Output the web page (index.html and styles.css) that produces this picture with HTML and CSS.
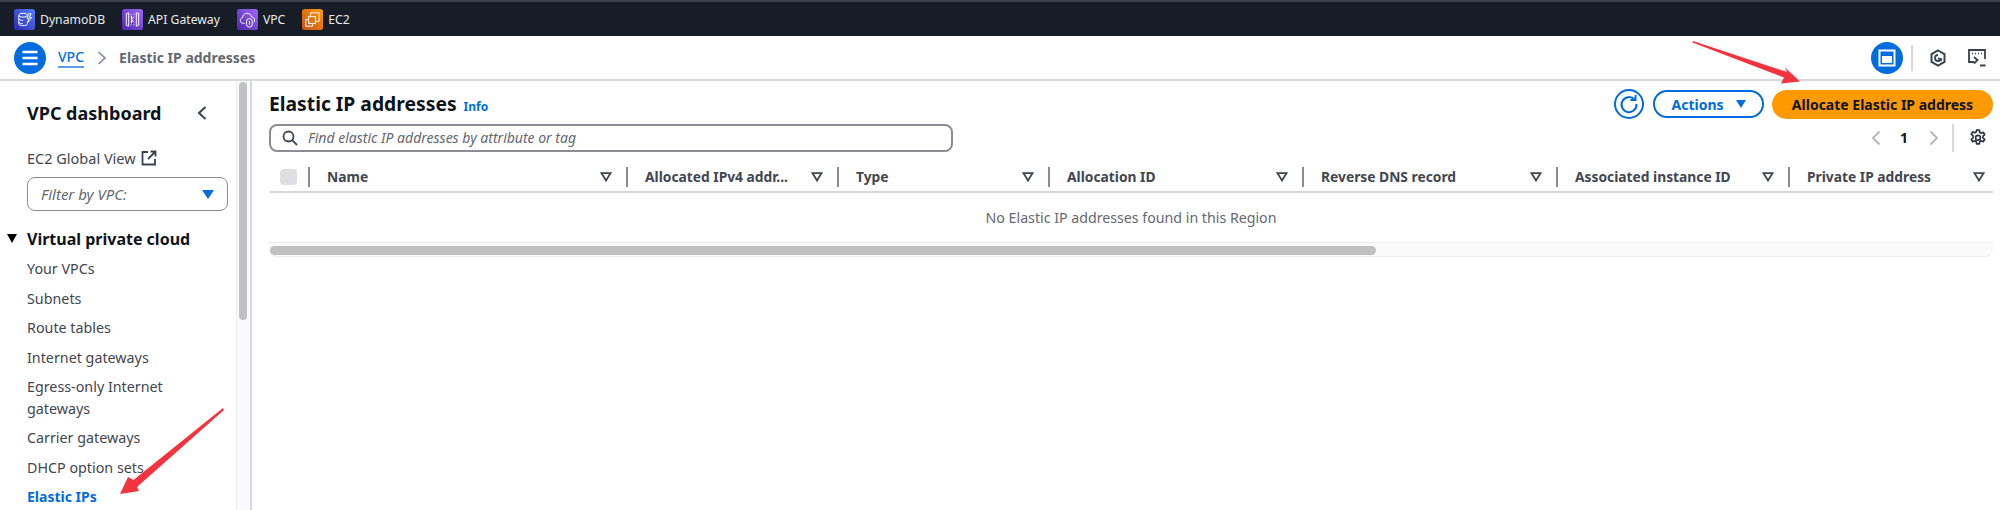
FILE: index.html
```html
<!DOCTYPE html>
<html lang="en">
<head>
<meta charset="utf-8">
<title>Elastic IP addresses</title>
<link rel="stylesheet" href="styles.css">
</head>
<body>
<header class="topbar">
  <a class="fav"><svg class="fav-icon" viewBox="0 0 22 22"><defs><linearGradient id="gd" x1="0" y1="1" x2="1" y2="0"><stop offset="0" stop-color="#2e27ad"/><stop offset="1" stop-color="#527fff"/></linearGradient></defs><rect width="22" height="22" rx="3" fill="url(#gd)"/><g fill="none" stroke="#fff" stroke-width="1"><ellipse cx="9.5" cy="6.5" rx="4.5" ry="2"/><path d="M5 6.500v9c0 1.200 2 2 4.500 2s4.500-.8 4.500-2v-2M5 10c0 1.200 2 2 4.500 2M5 13.500c0 1.200 2 2 4.500 2M14 8v1M15 5h3l-2 4h2.500l-4 5 1-4h-1.500z"/></g></svg>DynamoDB</a>
  <a class="fav"><svg class="fav-icon" viewBox="0 0 22 22"><defs><linearGradient id="ga" x1="0" y1="1" x2="1" y2="0"><stop offset="0" stop-color="#4d27a8"/><stop offset="1" stop-color="#a166ff"/></linearGradient></defs><rect width="22" height="22" rx="3" fill="url(#ga)"/><g fill="none" stroke="#fff" stroke-width="1"><path d="M7 4 4.500 5v12L7 18zM15 4l2.500 1v12L15 18zM9.500 5v1M9.500 8v1M9.500 13v1M9.500 16v1M12.500 5v1M12.500 16v1M12.500 8 10 11l2.500 3M10 7v8"/></g></svg>API Gateway</a>
  <a class="fav"><svg class="fav-icon" viewBox="0 0 22 22"><rect width="22" height="22" rx="3" fill="url(#ga)"/><g fill="none" stroke="#fff" stroke-width="1"><path d="M8 15H6.500C4.500 15 3.500 13.500 3.500 12c0-1.500 1-2.700 2.300-2.900C6 6.500 8 4.500 10.500 4.500c2.500 0 4.300 1.700 4.800 3.800 1.800.2 3.200 1.700 3.200 3.400 0 .8-.3 1.500-.7 2.100"/><rect x="10" y="10" width="6" height="9" rx="3"/><path d="M13 12.500v4"/></g></svg>VPC</a>
  <a class="fav"><svg class="fav-icon" viewBox="0 0 22 22"><defs><linearGradient id="ge" x1="0" y1="1" x2="1" y2="0"><stop offset="0" stop-color="#c8511b"/><stop offset="1" stop-color="#ff9900"/></linearGradient></defs><rect width="22" height="22" rx="3" fill="url(#ge)"/><g fill="none" stroke="#fff" stroke-width="1"><path d="M9 8V4h9v9h-4"/><rect x="7" y="8" width="7" height="7"/><path d="M7 11H4v7h7v-3"/></g></svg>EC2</a>
</header>

<nav class="crumbbar">
  <button class="round-btn" aria-label="Menu"><svg viewBox="0 0 32 32" width="32" height="32"><path d="M8.500 10h15M8.500 16h15M8.500 22h15" stroke="#fff" stroke-width="2.500" fill="none"/></svg></button>
  <a class="crumb-link">VPC</a>
  <svg class="crumb-sep" viewBox="0 0 10 14" width="10" height="14"><path d="M1.500 1 8 7l-6.500 6" fill="none" stroke="#7d8998" stroke-width="1.600"/></svg>
  <span class="crumb-current">Elastic IP addresses</span>
  <div class="crumb-tools">
    <button class="round-btn" aria-label="Panel"><svg viewBox="0 0 32 32" width="32" height="32"><rect x="8.500" y="8.500" width="15" height="15" fill="none" stroke="#fff" stroke-width="2"/><rect x="11" y="14" width="10" height="7" fill="#fff"/></svg></button>
    <span class="tool-sep"></span>
    <svg class="tool-icon" viewBox="0 0 18 18" width="18" height="18"><path d="M9 1.500 15.500 5.200v7.600L9 16.500 2.500 12.800V5.200z" fill="none" stroke="#39424e" stroke-width="2"/><path d="M9 6a3 3 0 1 0 3 3" fill="none" stroke="#39424e" stroke-width="1.800"/><path d="M9 9l4 2.500" stroke="#39424e" stroke-width="1.800"/></svg>
    <svg class="tool-icon" viewBox="0 0 18 18" width="18" height="18"><path d="M6 13H1V1h16v9" fill="none" stroke="#39424e" stroke-width="1.800"/><path d="M4 4.500h1M7 4.500h1M10 4.500h1M13 4.500h1" stroke="#39424e" stroke-width="1.500"/><path d="M6 8l3.500 3L6 14.500M12 16.500h5.500" fill="none" stroke="#39424e" stroke-width="1.800"/></svg>
  </div>
</nav>

<div class="workspace">
  <aside class="sidebar">
    <div class="side-inner">
      <div class="side-head">
        <h2 class="side-title">VPC dashboard</h2>
        <svg viewBox="0 0 12 16" width="12" height="16"><path d="M9.500 2 3 8l6.500 6" fill="none" stroke="#39424e" stroke-width="2"/></svg>
      </div>
      <a class="side-global">EC2 Global View<svg viewBox="0 0 16 16" width="16" height="16"><path d="M7 2H1.500v12.500H14V9" fill="none" stroke="#39424e" stroke-width="1.800"/><path d="M9.500 1.500h5v5M14.500 1.500 7 9" fill="none" stroke="#39424e" stroke-width="1.800"/></svg></a>
      <div class="side-filter"><span>Filter by VPC:</span><i class="caret caret-blue caret-large"></i></div>
      <div class="side-section"><i class="caret caret-black"></i>Virtual private cloud</div>
      <ul class="side-list">
        <li>Your VPCs</li>
        <li>Subnets</li>
        <li>Route tables</li>
        <li>Internet gateways</li>
        <li>Egress-only Internet gateways</li>
        <li>Carrier gateways</li>
        <li>DHCP option sets</li>
        <li class="active">Elastic IPs</li>
      </ul>
    </div>
    <div class="side-scroll"><div class="side-thumb"></div></div>
  </aside>

  <main class="main">
    <div class="title-row">
      <h1 class="page-title">Elastic IP addresses</h1>
      <a class="info">Info</a>
      <div class="actions">
        <button class="refresh" aria-label="Refresh"><svg viewBox="0 0 20 20" width="20" height="20"><path d="M15.500 5.500A7.500 7.500 0 1 0 17.500 10" fill="none" stroke="#006ce0" stroke-width="2"/><path d="M11.500 6h5V1" fill="none" stroke="#006ce0" stroke-width="2"/></svg></button>
        <button class="btn-actions">Actions<i class="caret caret-blue"></i></button>
        <button class="btn-primary">Allocate Elastic IP address</button>
      </div>
    </div>
    <div class="filter-row">
      <div class="search">
        <svg viewBox="0 0 16 16" width="16" height="16"><circle cx="6.500" cy="6.500" r="5" fill="none" stroke="#424650" stroke-width="1.800"/><path d="M10.200 10.200 15 15" stroke="#424650" stroke-width="1.800"/></svg>
        <span>Find elastic IP addresses by attribute or tag</span>
      </div>
      <div class="pager">
        <svg viewBox="0 0 10 16" width="10" height="16"><path d="M8.500 1.500 2 8l6.500 6.500" fill="none" stroke="#b4b4bb" stroke-width="1.800"/></svg>
        <span class="page-no">1</span>
        <svg viewBox="0 0 10 16" width="10" height="16"><path d="M1.500 1.500 8 8l-6.500 6.500" fill="none" stroke="#b4b4bb" stroke-width="1.800"/></svg>
        <span class="pager-sep"></span>
        <svg class="gear" viewBox="0 0 18 18" width="18" height="18"><path d="M7.600 1.200h2.800l.4 2.200 1.500.8 2-.9 1.400 2.400-1.700 1.400v1.800l1.700 1.400-1.400 2.400-2-.9-1.500.8-.4 2.200H7.600l-.4-2.200-1.500-.8-2 .9-1.400-2.400 1.700-1.400V6.700L2.300 5.300 3.700 2.900l2 .9 1.500-.8z" fill="none" stroke="#2c3440" stroke-width="1.700" stroke-linejoin="round"/><circle cx="9" cy="8.700" r="2.400" fill="none" stroke="#2c3440" stroke-width="1.700"/></svg>
      </div>
    </div>
    <div class="table">
      <div class="thead">
        <div class="th-check"><span class="checkbox"></span></div>
        <div class="th th-name"><span>Name</span><svg class="sort" viewBox="0 0 12 10"><path d="M1.500 1.200h9L6 8.500z" fill="none" stroke="#424650" stroke-width="1.800"/></svg></div>
        <div class="th th-ip"><span>Allocated IPv4 addr...</span><svg class="sort" viewBox="0 0 12 10"><path d="M1.500 1.200h9L6 8.500z" fill="none" stroke="#424650" stroke-width="1.800"/></svg></div>
        <div class="th th-ip"><span>Type</span><svg class="sort" viewBox="0 0 12 10"><path d="M1.500 1.200h9L6 8.500z" fill="none" stroke="#424650" stroke-width="1.800"/></svg></div>
        <div class="th th-id"><span>Allocation ID</span><svg class="sort" viewBox="0 0 12 10"><path d="M1.500 1.200h9L6 8.500z" fill="none" stroke="#424650" stroke-width="1.800"/></svg></div>
        <div class="th th-id"><span>Reverse DNS record</span><svg class="sort" viewBox="0 0 12 10"><path d="M1.500 1.200h9L6 8.500z" fill="none" stroke="#424650" stroke-width="1.800"/></svg></div>
        <div class="th th-inst"><span>Associated instance ID</span><svg class="sort" viewBox="0 0 12 10"><path d="M1.500 1.200h9L6 8.500z" fill="none" stroke="#424650" stroke-width="1.800"/></svg></div>
        <div class="th th-last"><span>Private IP address</span><svg class="sort" viewBox="0 0 12 10"><path d="M1.500 1.200h9L6 8.500z" fill="none" stroke="#424650" stroke-width="1.800"/></svg></div>
      </div>
      <div class="empty">No Elastic IP addresses found in this Region</div>
      <div class="hscroll"><div class="hthumb"></div></div>
    </div>
  </main>
</div>

<svg class="annotations" viewBox="0 0 2000 510" width="2000" height="510">
  <path d="M1693 41 1787 72 1785 67.500 1800 81.500 1781 83.500 1784 77.500 1692.500 42.500z" fill="#f5333f"/>
  <path d="M223 408 133.500 480 128 477 120 494 139 491 137 487 224 410z" fill="#f5333f"/>
</svg>
</body>
</html>
```
FILE: styles.css
```css
* { box-sizing: border-box; }
html, body { margin: 0; padding: 0; }
body {
  position: relative;
  width: 2000px;
  height: 510px;
  overflow: hidden;
  background: #fff;
  font-family: "Noto Sans", sans-serif;
  font-size: 14px;
  color: #424650;
}
button { font-family: inherit; border: 0; padding: 0; background: none; }
h1, h2 { margin: 0; }
ul { margin: 0; padding: 0; list-style: none; }
i { display: block; }

.topbar {
  height: 36px;
  display: flex;
  align-items: center;
  gap: 17px;
  padding: 1px 0 0 14px;
  background: #161d26;
  border-top: 2px solid #3b4048;
}
.fav { display: flex; align-items: center; gap: 5px; color: #e9ebed; font-size: 12.200px; font-weight: 400; }
.fav-icon { width: 21px; height: 21px; }

.crumbbar {
  height: 45px;
  display: flex;
  align-items: center;
  padding: 0 14px 0 14px;
  border-bottom: 2px solid #d5d8dc;
}
.round-btn { width: 32px; height: 32px; border-radius: 50%; background: #006ce0; display: block; }
.round-btn svg { display: block; }
.crumb-link { margin-left: 12px; color: #006ce0; font-size: 14px; font-weight: 500; line-height: 18px; border-bottom: 2px solid #5b9ee8; }
.crumb-sep { margin: 0 12px 0 13px; }
.crumb-current { color: #656871; font-size: 14px; font-weight: 700; }
.crumb-tools { margin-left: auto; display: flex; align-items: center; }
.tool-sep { width: 2px; height: 26px; background: #d5d8dc; margin: 0 16px 0 8px; }
.tool-icon + .tool-icon { margin-left: 21px; }

.workspace { display: flex; height: 429px; }
.sidebar { width: 252px; display: flex; border-right: 2px solid #d5d8dc; flex: none; }
.side-inner { width: 236px; padding: 0 0 0 27px; flex: none; }
.side-scroll { width: 14px; background: #fafafa; border-left: 1px solid #ececec; padding: 1px 0 0 2px; }
.side-thumb { width: 8px; height: 238px; border-radius: 4px; background: #c1c1c1; }
.side-head { display: flex; align-items: center; justify-content: space-between; padding: 16px 28px 0 0; height: 48px; }
.side-title { font-size: 18px; font-weight: 700; color: #0f141a; line-height: 24px; }
.side-global { display: flex; align-items: center; gap: 5px; margin-top: 19px; height: 20px; font-size: 14.500px; color: #424650; }
.side-filter {
  width: 201px;
  height: 34px;
  margin-top: 9px;
  padding: 0 13px;
  display: flex;
  align-items: center;
  justify-content: space-between;
  border: 1px solid #8c8c94;
  border-radius: 8px;
  font-style: italic;
  font-size: 15px;
  color: #656871;
}
.caret { width: 0; height: 0; border-style: solid; border-width: 8px 5.500px 0; border-color: #000 transparent transparent; }
.caret-blue { border-top-color: #006ce0; }
.caret-large { border-width: 9px 6px 0; }
.side-section { position: relative; margin-top: 17px; font-size: 16px; font-weight: 700; color: #0f141a; line-height: 22px; }
.caret-black { position: absolute; left: -20px; top: 6px; border-width: 9px 5.500px 0; }
.side-list { width: 175px; margin-top: 8px; font-size: 14.300px; line-height: 21.700px; }
.side-list li { margin-bottom: 7.800px; }
.side-list .active { color: #006ce0; font-weight: 700; font-size: 14px; }

.main { flex: 1; padding: 0 7px 0 17px; min-width: 0; }
.title-row { display: flex; align-items: center; height: 41px; padding-top: 5px; }
.page-title { font-size: 19.300px; font-weight: 700; color: #0f141a; line-height: 26px; }
.info { margin-left: 7px; padding-top: 4px; color: #006ce0; font-size: 12px; font-weight: 700; }
.actions { margin-left: auto; display: flex; align-items: center; }
.refresh { width: 30px; height: 30px; border: 2px solid #006ce0; border-radius: 50%; display: flex; align-items: center; justify-content: center; }
.btn-actions {
  width: 111px;
  height: 28px;
  margin-left: 9px;
  border: 2px solid #006ce0;
  border-radius: 14px;
  color: #006ce0;
  font-size: 14px;
  font-weight: 700;
  display: flex;
  align-items: center;
  justify-content: center;
  gap: 12px;
}
.btn-primary {
  width: 221px;
  height: 29px;
  margin-left: 8px;
  border-radius: 15px;
  background: #ff9900;
  color: #0f141a;
  font-size: 14px;
  font-weight: 700;
}
.filter-row { display: flex; align-items: center; justify-content: space-between; height: 29px; margin-top: 1px; }
.search {
  width: 684px;
  height: 28px;
  display: flex;
  align-items: center;
  gap: 10px;
  padding: 0 11px;
  border: 2px solid #8c8c94;
  border-radius: 8px;
  font-style: italic;
  color: #656871;
  font-size: 14px;
}
.pager { display: flex; align-items: center; padding-right: 6px; }
.page-no { margin: 0 21px 0 19px; color: #0f141a; font-weight: 700; font-size: 14px; }
.pager-sep { width: 2px; height: 28px; background: #d5d8dc; margin: 0 15px 0 13px; }
.gear { display: block; }

.table { margin-top: 9px; }
.thead { display: flex; height: 32px; align-items: center; border-bottom: 2px solid #d5d8dc; padding-top: 1px; }
.th-check { width: 39px; flex: none; padding-left: 11px; }
.checkbox { display: block; width: 17px; height: 16px; border-radius: 4px; background: #dedee3; }
.th {
  display: flex;
  align-items: center;
  justify-content: space-between;
  height: 20px;
  padding: 0 14px 0 17px;
  border-left: 2px solid #8c8c94;
  flex: none;
  font-size: 13.800px;
  font-weight: 700;
  color: #424650;
  white-space: nowrap;
}
.th-name { width: 318px; }
.th-ip { width: 211px; }
.th-id { width: 254px; }
.th-inst { width: 232px; }
.th-last { width: 204px; padding-right: 7px; }
.sort { width: 12px; height: 10px; flex: none; }
.empty { height: 50px; display: flex; align-items: center; justify-content: center; color: #656871; font-size: 14.200px; border-bottom: 1px solid #ebebec; }
.hscroll { height: 14px; padding: 3px 1px 0; border-bottom: 1px solid #ebebec; background: #fafafa; border-radius: 0 0 8px 8px; }
.hthumb { width: 1106px; height: 9px; border-radius: 5px; background: #c1c1c1; }

.annotations { position: absolute; left: 0; top: 0; pointer-events: none; }
```
